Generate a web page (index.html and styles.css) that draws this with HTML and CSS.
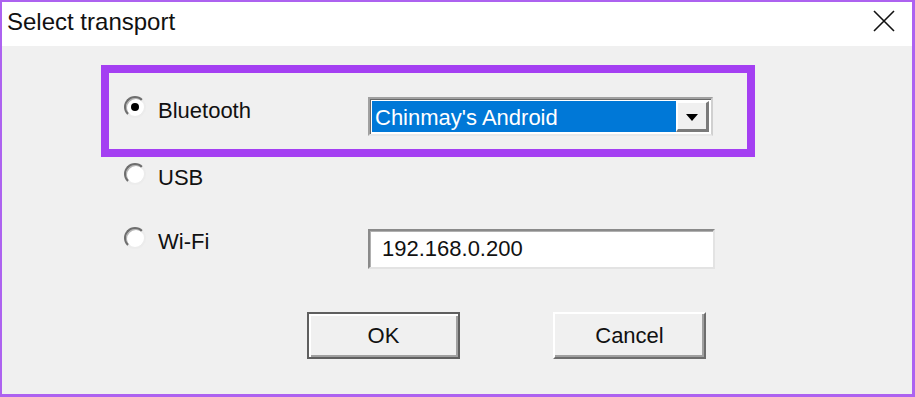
FILE: index.html
```html
<!DOCTYPE html>
<html lang="en">
<head>
    <meta charset="UTF-8">
    <meta name="viewport" content="width=device-width, initial-scale=1.0">
    <title>Select transport</title>
    <link rel="stylesheet" href="styles.css">
</head>
<body>

<div class="window">
    <div class="titlebar">
        <span class="title">Select transport</span>
        <button class="close" title="Close">
            <svg width="22" height="22" viewBox="0 0 22 22">
                <path d="M1 1 L21 21 M21 1 L1 21" stroke="#111" stroke-width="1.6" fill="none"/>
            </svg>
        </button>
    </div>

    <div class="dialog">
        <div class="row selected">
            <label class="option"><span class="radio checked"></span>Bluetooth</label>
            <div class="combo">
                <div class="combo-value">Chinmay's Android</div>
                <div class="combo-btn"><span class="arrow"></span></div>
            </div>
        </div>
        <div class="row row-usb">
            <label class="option"><span class="radio"></span>USB</label>
        </div>
        <div class="row row-wifi">
            <label class="option"><span class="radio"></span>Wi-Fi</label>
            <div class="field">192.168.0.200</div>
        </div>

        <div class="actions">
            <button class="btn default">OK</button>
            <button class="btn">Cancel</button>
        </div>
    </div>
</div>

</body>
</html>
```

FILE: styles.css
```css
body {
    margin: 0;
    font-family: "Liberation Sans", Arial, sans-serif;
    color: #111;
}

.window {
    width: 915px;
    height: 397px;
    box-sizing: border-box;
    border: solid #ad62f0;
    border-width: 2px 3px 3px 2px;
    display: flex;
    flex-direction: column;
    background-color: #f0f0f0;
}

.titlebar {
    height: 44px;
    flex-shrink: 0;
    background: white;
    display: flex;
    justify-content: space-between;
    align-items: flex-start;
    padding-left: 5px;
}

.title {
    font-size: 24px;
    line-height: 40px;
}

.close {
    width: 22px;
    height: 22px;
    margin: 8px 17px 0 0;
    padding: 0;
    border: none;
    background: none;
}

.close svg {
    display: block;
}

.dialog {
    flex: 1;
    padding: 19px 0 0 99px;
}

/* every row keeps the frame width so the columns line up */
.row {
    display: flex;
    align-items: flex-start;
    width: 654px;
    box-sizing: border-box;
    padding: 0 16px;
    border: 8px solid transparent;
}

.row.selected {
    border-color: #a43ff2;
    padding-top: 24px;
    padding-bottom: 13px;
}

.row-wifi {
    margin-top: 22px;
}

.option {
    width: 243px;
    flex-shrink: 0;
    display: flex;
    align-items: flex-start;
    gap: 12px;
    font-size: 22px;
    line-height: 26px;
}

.row.selected .option {
    margin-top: 1px;
}

.radio {
    position: relative;
    width: 22px;
    height: 22px;
    margin: -2px 0 0 -1px;
    box-sizing: border-box;
    border-radius: 50%;
    border: 2px solid;
    border-color: #6e6e6e #ececec #ececec #6e6e6e;
    box-shadow: inset 1px 1px 0 #b4b4b4;
    background: #fff;
}

.radio.checked::after {
    content: "";
    position: absolute;
    left: 5px;
    top: 5px;
    width: 8px;
    height: 8px;
    border-radius: 50%;
    background: #000;
}

.combo {
    display: flex;
    width: 345px;
    height: 39px;
    box-sizing: border-box;
    border: 2px solid;
    border-color: #a0a0a0 #d0d0d0 #e8e8e8 #a0a0a0;
    box-shadow: inset 1px 1px 0 #696969;
    padding: 2px;
    background: #fff;
}

.combo-value {
    flex: 1;
    background-color: #0078d7;
    color: white;
    font-size: 22px;
    line-height: 29px;
    padding: 2px 0 0 3px;
}

.combo-btn {
    width: 33px;
    box-sizing: border-box;
    border: solid;
    border-width: 2px 3px 3px 2px;
    border-color: #fff #7a7a7a #7a7a7a #fff;
    background: #f0f0f0;
    display: flex;
    justify-content: center;
    align-items: center;
}

.arrow {
    width: 0;
    height: 0;
    border-left: 6px solid transparent;
    border-right: 6px solid transparent;
    border-top: 7px solid #000;
    margin-top: 2px;
}

.field {
    width: 347px;
    height: 40px;
    box-sizing: border-box;
    border: 2px solid;
    border-color: #8a8a8a #e3e3e3 #e3e3e3 #8a8a8a;
    box-shadow: inset 1px 1px 0 #b0b0b0;
    background: #fff;
    font-size: 22px;
    line-height: 36px;
    padding-left: 12px;
}

.actions {
    display: flex;
    gap: 93px;
    margin: 35px 0 0 206px;
}

.btn {
    width: 153px;
    height: 47px;
    box-sizing: border-box;
    border: 2px solid;
    border-color: #fff #6d6d6d #6d6d6d #fff;
    box-shadow: inset -2px -2px 0 #a0a0a0;
    background-color: #f0f0f0;
    font-family: "Liberation Sans", Arial, sans-serif;
    font-size: 22px;
    line-height: 43px;
    padding: 0;
    color: #111;
}

.btn.default {
    border-color: #5f5f5f;
    box-shadow: inset 2px 2px 0 #fff, inset -2px -2px 0 #a0a0a0;
}
```
